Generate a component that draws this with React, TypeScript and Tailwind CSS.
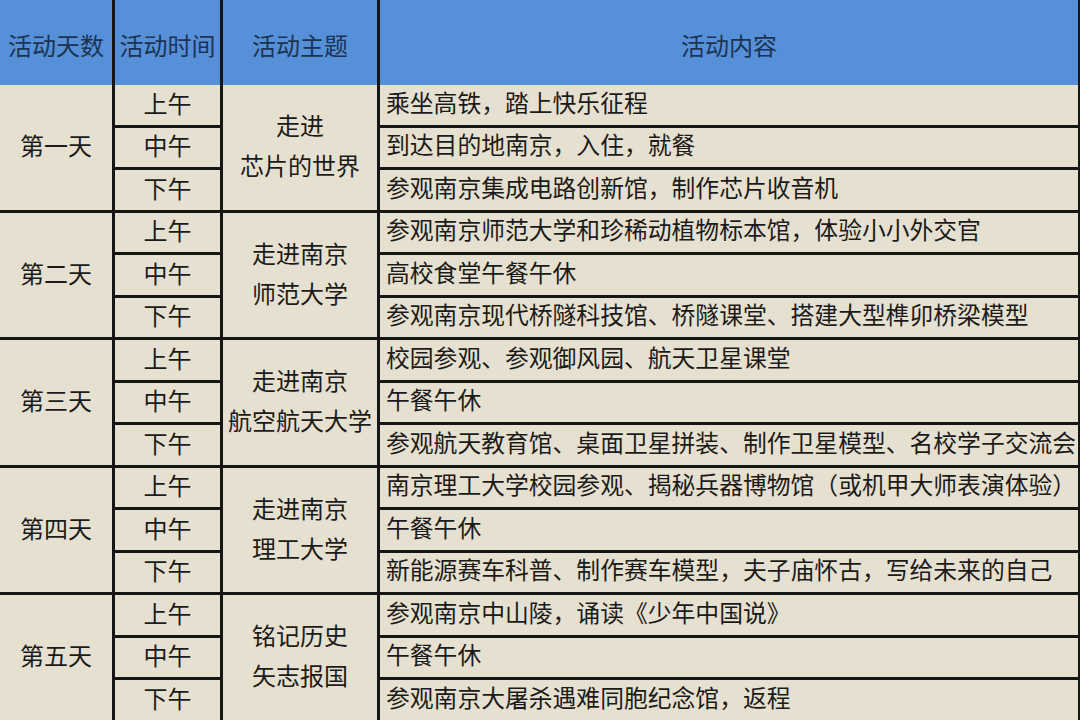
import React from 'react';

interface Day {
  day: string;
  theme: string[];
  items: string[];
}

const days: Day[] = [
  {
    day: '第一天',
    theme: ['走进', '芯片的世界'],
    items: ['乘坐高铁，踏上快乐征程', '到达目的地南京，入住，就餐', '参观南京集成电路创新馆，制作芯片收音机'],
  },
  {
    day: '第二天',
    theme: ['走进南京', '师范大学'],
    items: [
      '参观南京师范大学和珍稀动植物标本馆，体验小小外交官',
      '高校食堂午餐午休',
      '参观南京现代桥隧科技馆、桥隧课堂、搭建大型榫卯桥梁模型',
    ],
  },
  {
    day: '第三天',
    theme: ['走进南京', '航空航天大学'],
    items: [
      '校园参观、参观御风园、航天卫星课堂',
      '午餐午休',
      '参观航天教育馆、桌面卫星拼装、制作卫星模型、名校学子交流会',
    ],
  },
  {
    day: '第四天',
    theme: ['走进南京', '理工大学'],
    items: [
      '南京理工大学校园参观、揭秘兵器博物馆（或机甲大师表演体验）',
      '午餐午休',
      '新能源赛车科普、制作赛车模型，夫子庙怀古，写给未来的自己',
    ],
  },
  {
    day: '第五天',
    theme: ['铭记历史', '矢志报国'],
    items: ['参观南京中山陵，诵读《少年中国说》', '午餐午休', '参观南京大屠杀遇难同胞纪念馆，返程'],
  },
];

const times = ['上午', '中午', '下午'];

export default function App() {
  return (
    <div className="w-[1080px] h-[720px] overflow-hidden bg-[#e6e0d0] text-[#1c1b19] font-['Liberation_Serif','Noto_Sans_CJK_SC',serif] text-[24px]">
      {/* Header */}
      <div className="flex h-[85px] bg-[#5590d9] text-[#1d3352]">
        <div className="w-[115px] shrink-0 border-r-[3px] border-[#161616] flex items-center justify-center pt-2">
          活动天数
        </div>
        <div className="w-[108px] shrink-0 border-r-[3px] border-[#161616] flex items-center justify-center pt-2">
          活动时间
        </div>
        <div className="w-[157px] shrink-0 border-r-[3px] border-[#161616] flex items-center justify-center pt-2">
          活动主题
        </div>
        <div className="flex-1 border-r-[2px] border-[#161616] flex items-center justify-center pt-2">
          活动内容
        </div>
      </div>

      {/* Body */}
      {days.map((d) => (
        <div key={d.day} className="flex h-[127.5px]">
          <div className="w-[115px] shrink-0 border-r-[3px] border-b-[3px] border-[#161616] flex items-center justify-center">
            {d.day}
          </div>
          <div className="w-[108px] shrink-0 flex flex-col">
            {times.map((t) => (
              <div
                key={t}
                className="h-[42.5px] border-r-[3px] border-b-[3px] border-[#161616] flex items-center justify-center"
              >
                {t}
              </div>
            ))}
          </div>
          <div className="w-[157px] shrink-0 border-r-[3px] border-b-[3px] border-[#161616] flex flex-col items-center justify-center leading-[40px]">
            {d.theme.map((t) => (
              <span key={t}>{t}</span>
            ))}
          </div>
          <div className="flex-1 flex flex-col">
            {d.items.map((it, j) => (
              <div
                key={j}
                className="h-[42.5px] border-r-[2px] border-b-[3px] border-[#161616] flex items-center pl-[6px] whitespace-nowrap text-[23.8px]"
              >
                {it}
              </div>
            ))}
          </div>
        </div>
      ))}
    </div>
  );
}
